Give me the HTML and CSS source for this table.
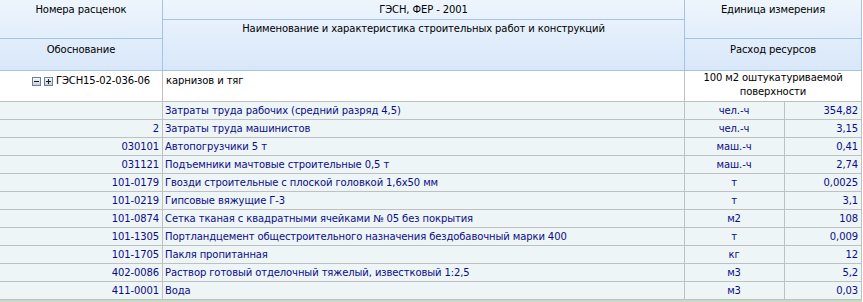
FILE: index.html
```html
<!DOCTYPE html>
<html lang="ru">
<head>
<meta charset="utf-8">
<link rel="stylesheet" href="styles.css">
</head>
<body>
<div class="grid">
  <div class="head">
    <div class="h c1a">Номера расценок</div>
    <div class="h c2a">ГЭСН, ФЕР - 2001</div>
    <div class="h c3a">Единица измерения</div>
    <div class="h c2b">Наименование и характеристика строительных работ и конструкций</div>
    <div class="h c1c">Обоснование</div>
    <div class="h c3c">Расход ресурсов</div>
  </div>
  <div class="main">
    <div class="m code"><span class="tg minus"></span><span class="tg plus"></span>ГЭСН15-02-036-06</div>
    <div class="m name">карнизов и тяг</div>
    <div class="m unit">100 м2 оштукатуриваемой поверхности</div>
  </div>
  <div class="rows">
    <div class="row"><div class="d code"></div><div class="d name">Затраты труда рабочих (средний разряд 4,5)</div><div class="d unit">чел.-ч</div><div class="d val">354,82</div></div>
    <div class="row"><div class="d code">2</div><div class="d name">Затраты труда машинистов</div><div class="d unit">чел.-ч</div><div class="d val">3,15</div></div>
    <div class="row"><div class="d code">030101</div><div class="d name">Автопогрузчики 5 т</div><div class="d unit">маш.-ч</div><div class="d val">0,41</div></div>
    <div class="row"><div class="d code">031121</div><div class="d name">Подъемники мачтовые строительные 0,5 т</div><div class="d unit">маш.-ч</div><div class="d val">2,74</div></div>
    <div class="row"><div class="d code">101-0179</div><div class="d name">Гвозди строительные с плоской головкой 1,6x50 мм</div><div class="d unit">т</div><div class="d val">0,0025</div></div>
    <div class="row"><div class="d code">101-0219</div><div class="d name">Гипсовые вяжущие Г-3</div><div class="d unit">т</div><div class="d val">3,1</div></div>
    <div class="row"><div class="d code">101-0874</div><div class="d name">Сетка тканая с квадратными ячейками № 05 без покрытия</div><div class="d unit">м2</div><div class="d val">108</div></div>
    <div class="row"><div class="d code">101-1305</div><div class="d name">Портландцемент общестроительного назначения бездобавочный марки 400</div><div class="d unit">т</div><div class="d val">0,009</div></div>
    <div class="row"><div class="d code">101-1705</div><div class="d name">Пакля пропитанная</div><div class="d unit">кг</div><div class="d val">12</div></div>
    <div class="row"><div class="d code">402-0086</div><div class="d name">Раствор готовый отделочный тяжелый, известковый 1:2,5</div><div class="d unit">м3</div><div class="d val">5,2</div></div>
    <div class="row"><div class="d code">411-0001</div><div class="d name">Вода</div><div class="d unit">м3</div><div class="d val">0,03</div></div>
  </div>
  <div class="foot"></div>
</div>
</body>
</html>
```
FILE: styles.css
```css
html, body {
  margin: 0;
  padding: 0;
  background: #ffffff;
}
.grid {
  width: 862px;
  font-family: "DejaVu Sans", Tahoma, sans-serif;
  font-size: 10px;
  line-height: 12px;
  letter-spacing: -0.1px;
}
.head {
  display: grid;
  grid-template-columns: 163px 522px 177px;
  grid-template-rows: 20px 19px 32px;
  background: linear-gradient(#eef5fd, #d8e7f9);
  color: #000;
}
.h {
  box-sizing: border-box;
  border-right: 1px solid #a3c3ea;
  border-bottom: 1px solid #a3c3ea;
  text-align: center;
  padding-top: 4px;
}
.c1a { grid-column: 1; grid-row: 1 / 3; }
.c2a { grid-column: 2; grid-row: 1; }
.c3a { grid-column: 3; grid-row: 1 / 3; }
.c2b { grid-column: 2; grid-row: 2 / 4; padding-top: 3px; }
.c1c { grid-column: 1; grid-row: 3; padding-top: 5px; }
.c3c { grid-column: 3; grid-row: 3; padding-top: 5px; }
.main {
  display: grid;
  grid-template-columns: 163px 522px 177px;
  height: 31px;
  background: #fff;
  color: #000;
}
.m {
  box-sizing: border-box;
  border-right: 1px solid #c0c0c0;
  border-bottom: 1px solid #c0c0c0;
  padding: 4px 3px 0 3px;
  overflow: hidden;
}
.m.code {
  display: flex;
  justify-content: flex-end;
  align-items: flex-start;
  padding-right: 12px;
}
.m.unit {
  text-align: center;
  padding: 0;
  line-height: 14px;
}
.tg {
  width: 7px;
  height: 7px;
  border: 1px solid #6f7f99;
  background: linear-gradient(#f4f6f8, #c9d0da);
  position: relative;
  margin-top: 2px;
  margin-right: 3px;
}
.tg::before {
  content: "";
  position: absolute;
  left: 1px;
  top: 3px;
  width: 5px;
  height: 1px;
  background: #1b1b1b;
}
.plus::after {
  content: "";
  position: absolute;
  left: 3px;
  top: 1px;
  width: 1px;
  height: 5px;
  background: #1b1b1b;
}
.row {
  display: grid;
  grid-template-columns: 163px 522px 100px 77px;
  height: 18px;
  background: #edf5f6;
  color: #0c0c88;
}
.d {
  box-sizing: border-box;
  border-right: 1px solid #c0c0c0;
  border-bottom: 1px solid #c0c0c0;
  padding: 3px 3px 0 2px;
  white-space: nowrap;
  overflow: hidden;
}
.d.code { text-align: right; }
.d.unit { text-align: center; }
.d.val { text-align: right; }
.foot {
  height: 4px;
  background: #c3dcc3;
}
```
